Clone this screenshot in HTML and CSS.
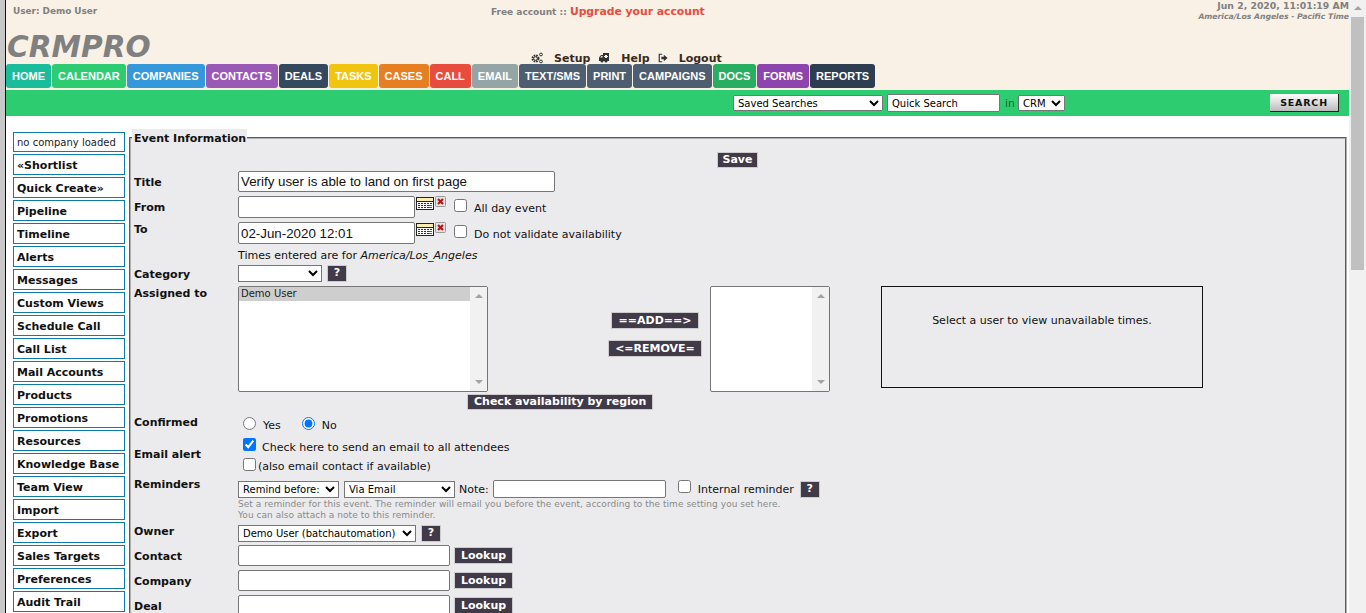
FILE: index.html
```html
<!DOCTYPE html>
<html lang="en">
<head>
    <meta charset="UTF-8">
    <title>CRMPRO</title>
    <link rel="stylesheet" href="styles.css">
</head>
<body>
<div class="frame">
    <div class="frame-edge"></div>
    <div class="page">
        <div class="top">
            <div class="top-info">
                <div class="user">User: Demo User</div>
                <div class="account">Free account :: <a href="#">Upgrade your account</a></div>
                <div class="clock">
                    <div class="date">Jun 2, 2020, 11:01:19 AM</div>
                    <div class="zone">America/Los Angeles - Pacific Time</div>
                </div>
            </div>
            <div class="logo-row">
                <div class="logo">CRMPRO</div>
                <div class="links">
                    <svg class="ico" viewBox="0 0 12 12"><circle cx="4.5" cy="6.5" r="3" fill="none" stroke="#333" stroke-width="2" stroke-dasharray="1.6 .8"/><circle cx="4.5" cy="6.5" r="1.8" fill="none" stroke="#333"/><circle cx="10" cy="2.5" r="1.4" fill="none" stroke="#333"/><circle cx="10" cy="9.5" r="1.4" fill="none" stroke="#333"/></svg>
                    <a href="#">Setup</a>
                    <svg class="ico ico-help" viewBox="0 0 11 12"><path d="M4 1h6v8H8.500a1.500 1.500 0 0 1-3 0h-1a1.500 1.500 0 0 1-3 0H0V5.500L2 3h2z" fill="#333"/><path d="M1.200 5.500 2.500 4H3.500v1.500zM6 3h2v1h1v1H8v1H6V5H5V4h1z" fill="#faf1e6"/></svg>
                    <a href="#">Help</a>
                    <svg class="ico ico-out" viewBox="0 0 12 12"><path d="M5 1.5H1.500v9H5" fill="none" stroke="#333" stroke-width="1.400"/><path d="M4 4.500h3V2l4.500 4L7 10V7.500H4z" fill="#333"/></svg>
                    <a href="#">Logout</a>
                </div>
            </div>
            <div class="tabs">
                <a class="tab c-home" href="#">HOME</a>
                <a class="tab c-cal" href="#">CALENDAR</a>
                <a class="tab c-comp" href="#">COMPANIES</a>
                <a class="tab c-cont" href="#">CONTACTS</a>
                <a class="tab c-deal" href="#">DEALS</a>
                <a class="tab c-task" href="#">TASKS</a>
                <a class="tab c-case" href="#">CASES</a>
                <a class="tab c-call" href="#">CALL</a>
                <a class="tab c-mail" href="#">EMAIL</a>
                <a class="tab c-text" href="#">TEXT/SMS</a>
                <a class="tab c-text" href="#">PRINT</a>
                <a class="tab c-text" href="#">CAMPAIGNS</a>
                <a class="tab c-docs" href="#">DOCS</a>
                <a class="tab c-form" href="#">FORMS</a>
                <a class="tab c-rep" href="#">REPORTS</a>
            </div>
        </div>
        <div class="searchbar">
            <select class="saved"><option>Saved Searches</option></select>
            <input class="quick" type="text" value="Quick Search">
            <span class="in">in</span>
            <select class="crm"><option>CRM</option></select>
            <button class="search-btn" type="button">SEARCH</button>
        </div>
        <div class="content">
            <div class="side">
                <div class="side-item side-first">no company loaded</div>
                <a class="side-item" href="#">«Shortlist</a>
                <a class="side-item" href="#">Quick Create»</a>
                <a class="side-item" href="#">Pipeline</a>
                <a class="side-item" href="#">Timeline</a>
                <a class="side-item" href="#">Alerts</a>
                <a class="side-item" href="#">Messages</a>
                <a class="side-item" href="#">Custom Views</a>
                <a class="side-item" href="#">Schedule Call</a>
                <a class="side-item" href="#">Call List</a>
                <a class="side-item" href="#">Mail Accounts</a>
                <a class="side-item" href="#">Products</a>
                <a class="side-item" href="#">Promotions</a>
                <a class="side-item" href="#">Resources</a>
                <a class="side-item" href="#">Knowledge Base</a>
                <a class="side-item" href="#">Team View</a>
                <a class="side-item" href="#">Import</a>
                <a class="side-item" href="#">Export</a>
                <a class="side-item" href="#">Sales Targets</a>
                <a class="side-item" href="#">Preferences</a>
                <a class="side-item" href="#">Audit Trail</a>
            </div>
            <fieldset class="event">
                <legend>Event Information</legend>
                <div class="save-row"><button class="dark save" type="button">Save</button></div>

                <div class="row h-title">
                    <label class="lbl">Title</label>
                    <input class="txt w-title" type="text" value="Verify user is able to land on first page">
                </div>
                <div class="row h-date">
                    <label class="lbl lbl-from">From</label>
                    <input class="txt w-date" type="text">
                    <svg class="cal" viewBox="0 0 18 13"><rect x=".5" y=".5" width="17" height="12" fill="#fff" stroke="#222"/><rect x="1" y="1" width="16" height="3" fill="#fdeeb0"/><path d="M1 4.500h16" stroke="#222"/><path d="M2 6.500h14M2 8.500h14M2 10.500h14" stroke="#333" stroke-dasharray="2 1"/><path d="M13 8.500h3M13 10.500h3" stroke="#d22"/></svg>
                    <svg class="del" viewBox="0 0 11 11"><rect x=".5" y=".5" width="10" height="10" rx="1" fill="#e4e4e4" stroke="#999"/><path d="M3 3l5 5M8 3l-5 5" stroke="#b01818" stroke-width="2.200"/></svg>
                    <input class="chk chk-top" type="checkbox">
                    <span class="opt opt-low">All day event</span>
                </div>
                <div class="row h-date">
                    <label class="lbl">To</label>
                    <input class="txt w-date" type="text" value="02-Jun-2020 12:01">
                    <svg class="cal" viewBox="0 0 18 13"><rect x=".5" y=".5" width="17" height="12" fill="#fff" stroke="#222"/><rect x="1" y="1" width="16" height="3" fill="#fdeeb0"/><path d="M1 4.500h16" stroke="#222"/><path d="M2 6.500h14M2 8.500h14M2 10.500h14" stroke="#333" stroke-dasharray="2 1"/><path d="M13 8.500h3M13 10.500h3" stroke="#d22"/></svg>
                    <svg class="del" viewBox="0 0 11 11"><rect x=".5" y=".5" width="10" height="10" rx="1" fill="#e4e4e4" stroke="#999"/><path d="M3 3l5 5M8 3l-5 5" stroke="#b01818" stroke-width="2.200"/></svg>
                    <input class="chk chk-top" type="checkbox">
                    <span class="opt opt-low">Do not validate availability</span>
                </div>
                <div class="row h-times">
                    <span class="lbl"></span>
                    <span class="opt">Times entered are for <em>America/Los_Angeles</em></span>
                </div>
                <div class="row h-cat">
                    <label class="lbl">Category</label>
                    <select class="sel w-cat"><option></option></select>
                    <button class="dark help" type="button">?</button>
                </div>
                <div class="row h-assign">
                    <label class="lbl">Assigned to</label>
                    <div class="list w-left">
                        <div class="list-body"><div class="list-picked">Demo User</div></div>
                        <div class="list-bar"><span class="up"></span><span class="down"></span></div>
                    </div>
                    <div class="movers">
                        <button class="dark add" type="button">==ADD==&gt;</button>
                        <button class="dark" type="button">&lt;=REMOVE=</button>
                    </div>
                    <div class="list w-right">
                        <div class="list-body"></div>
                        <div class="list-bar"><span class="up"></span><span class="down"></span></div>
                    </div>
                    <div class="unavail">Select a user to view unavailable times.</div>
                </div>
                <div class="row h-check">
                    <button class="dark check-region" type="button">Check availability by region</button>
                </div>
                <div class="row h-conf">
                    <label class="lbl">Confirmed</label>
                    <input class="rad" type="radio" name="conf">
                    <span class="opt rad-text">Yes</span>
                    <input class="rad" type="radio" name="conf" checked>
                    <span class="opt opt-conf">No</span>
                </div>
                <div class="row h-alert">
                    <label class="lbl">Email alert</label>
                    <div class="alert-opts">
                        <div><input class="chk chk-a" type="checkbox" checked><span class="opt opt-a">Check here to send an email to all attendees</span></div>
                        <div><input class="chk chk-b" type="checkbox"><span class="opt opt-b">(also email contact if available)</span></div>
                    </div>
                </div>
                <div class="row h-rem">
                    <label class="lbl">Reminders</label>
                    <select class="sel w-before"><option>Remind before:</option></select>
                    <select class="sel w-via"><option>Via Email</option></select>
                    <span class="opt note">Note:</span>
                    <input class="txt w-note" type="text">
                    <input class="chk chk-int" type="checkbox">
                    <span class="opt">Internal reminder</span>
                    <button class="dark help help-int" type="button">?</button>
                </div>
                <div class="row h-hint">
                    <span class="lbl"></span>
                    <div class="hint">Set a reminder for this event. The reminder will email you before the event, according to the time setting you set here.<br>You can also attach a note to this reminder.</div>
                </div>
                <div class="row h-owner">
                    <label class="lbl">Owner</label>
                    <select class="sel w-owner"><option>Demo User (batchautomation)</option></select>
                    <button class="dark help" type="button">?</button>
                </div>
                <div class="row h-look h-look-first">
                    <label class="lbl">Contact</label>
                    <input class="txt w-look" type="text">
                    <button class="dark lookup" type="button">Lookup</button>
                </div>
                <div class="row h-look">
                    <label class="lbl">Company</label>
                    <input class="txt w-look" type="text">
                    <button class="dark lookup" type="button">Lookup</button>
                </div>
                <div class="row h-look">
                    <label class="lbl">Deal</label>
                    <input class="txt w-look" type="text">
                    <button class="dark lookup" type="button">Lookup</button>
                </div>
            </fieldset>
        </div>
    </div>
    <div class="scroll">
        <span class="up"></span>
        <div class="thumb"></div>
    </div>
</div>
</body>
</html>
```

FILE: styles.css
```css
html, body {
    margin: 0;
    height: 100%;
    overflow: hidden;
}
body {
    font-family: "DejaVu Sans", sans-serif;
    font-size: 11px;
    color: #111;
    background: #fff;
}
a {
    text-decoration: none;
}
.frame {
    display: flex;
    height: 613px;
    overflow: hidden;
}
.frame-edge {
    width: 6px;
    flex: none;
    box-sizing: border-box;
    background: #c8c8c8;
    border-right: 1px solid #111;
}
.page {
    width: 1343px;
    flex: none;
    overflow: hidden;
}
.scroll {
    width: 17px;
    flex: none;
    background: #f1f1f1;
    position: relative;
}
.scroll .up {
    margin: 6px auto 0;
}
.thumb {
    position: absolute;
    top: 17px;
    left: 2px;
    width: 13px;
    height: 253px;
    background: #c0c0c0;
}

/* header */
.top {
    background: #f9f1e6;
    height: 90px;
    display: flex;
    flex-direction: column;
}
.top-info {
    display: flex;
    height: 33px;
    color: #808080;
    font-weight: bold;
}
.user {
    width: 485px;
    font-size: 8.900px;
    padding: 6px 0 0 7px;
    box-sizing: border-box;
}
.account {
    width: 400px;
    font-size: 9px;
    padding: 5px 0 0 0;
}
.account a {
    color: #e74c3c;
    font-size: 10.800px;
}
.clock {
    margin-left: auto;
    text-align: right;
}
.date {
    font-size: 9.300px;
}
.zone {
    font-size: 7.700px;
    font-style: italic;
    margin-top: 1px;
}
.logo-row {
    display: flex;
    height: 31px;
}
.logo {
    width: 525px;
    padding-left: 1px;
    font-size: 29.600px;
    line-height: 29px;
    font-weight: bold;
    font-style: italic;
    color: #808080;
    box-sizing: border-box;
}
.links {
    display: flex;
    align-items: center;
    padding-top: 19px;
    height: 12px;
    font-weight: bold;
    font-size: 11px;
}
.links a {
    color: #3b2a1c;
}
.ico {
    width: 12px;
    height: 12px;
    margin-right: 11px;
}
.ico-help {
    width: 11px;
    margin-left: 9px;
    margin-right: 11px;
}
.ico-out {
    margin-left: 8px;
    width: 10px;
    margin-right: 11px;
}
.tabs {
    display: flex;
    gap: 1px;
    height: 24px;
}
.tab {
    display: block;
    height: 24px;
    line-height: 24px;
    padding: 0 6px;
    border-radius: 3px;
    color: #fff;
    font-family: "Liberation Sans", sans-serif;
    font-size: 11px;
    font-weight: bold;
    white-space: nowrap;
}
.c-home { background: #1abc9c; }
.c-cal { background: #2ecc71; }
.c-comp { background: #3498db; }
.c-cont { background: #9b59b6; }
.c-deal { background: #34495e; }
.c-task { background: #f1c40f; }
.c-case { background: #e67e22; }
.c-call { background: #e74c3c; }
.c-mail { background: #95a5a6; }
.c-text { background: #4d5e70; }
.c-docs { background: #27ae60; }
.c-form { background: #8e44ad; }
.c-rep { background: #2c3e50; }

/* green search bar */
.searchbar {
    height: 26px;
    background: #2ecc71;
    display: flex;
    align-items: center;
    font-size: 10px;
}
.saved {
    margin-left: 727px;
    width: 150px;
    height: 16px;
    font: 10px "DejaVu Sans", sans-serif;
    padding: 0;
}
.quick {
    margin-left: 4px;
    width: 113px;
    height: 18px;
    box-sizing: border-box;
    font: 10px "DejaVu Sans", sans-serif;
    padding: 0 3px;
}
.in {
    color: #0f6a30;
    margin-left: 5px;
    font-size: 11px;
}
.crm {
    margin-left: 3px;
    width: 47px;
    height: 16px;
    font: 10px "DejaVu Sans", sans-serif;
    padding: 0;
}
.search-btn {
    margin-left: 205px;
    width: 69px;
    height: 18px;
    padding: 0;
    border: 0;
    border-right: 1px solid #222;
    border-bottom: 1px solid #222;
    background: linear-gradient(#fff, #bbb);
    font: bold 9.500px "DejaVu Sans", sans-serif;
    letter-spacing: .8px;
    color: #111;
}

/* main area */
.content {
    display: flex;
    align-items: flex-start;
}
.side {
    width: 112px;
    flex: none;
    margin: 16px 0 0 7px;
    display: flex;
    flex-direction: column;
    gap: 2px;
}
.side-item {
    display: block;
    box-sizing: border-box;
    height: 21px;
    line-height: 19px;
    padding: 1px 0 0 3px;
    border: 1px solid #0f7ca5;
    color: #111;
    font-size: 11px;
    font-weight: bold;
    background: #fff;
}
.side-first {
    height: 20px;
    font-weight: normal;
    font-size: 10px;
    color: #222;
    line-height: 18px;
}
.event {
    margin: 13px 0 0 4px;
    padding: 0 0 0 3px;
    width: 1218px;
    height: 500px;
    box-sizing: border-box;
    background: #ebebed;
    border: 2px groove #b0b0b0;
    border-bottom: 0;
    min-width: 0;
}
.event legend {
    padding: 0 1px 0 2px;
    margin-left: -2px;
    font-weight: bold;
    font-size: 11px;
    background: #ebebed;
    height: 17px;
    line-height: 19px;
}
.save-row {
    text-align: center;
    height: 21px;
    padding: 6px 4px 0 0;
    box-sizing: border-box;
}
.dark {
    background: #413a49;
    color: #fff;
    font: bold 11px "DejaVu Sans", sans-serif;
    border: 1px solid #ccc;
    padding: 0 6px;
    height: 17px;
    line-height: 14px;
}
.save {
    height: 16px;
    padding: 0 5px;
}
.help {
    width: 20px;
    height: 17px;
    padding: 0;
    margin-left: 5px;
}
.row {
    display: flex;
    align-items: center;
}
.lbl {
    width: 104px;
    flex: none;
    font-weight: bold;
    font-size: 11px;
}
.opt {
    font-size: 11px;
}
.txt {
    box-sizing: border-box;
    border: 1px solid #767676;
    border-radius: 2px;
    background: #fff;
    padding: 1px 2px;
    height: 21px;
    font: 13.330px "Liberation Sans", sans-serif;
    color: #111;
}
.sel {
    box-sizing: border-box;
    height: 17px;
    font: 10px "DejaVu Sans", sans-serif;
    padding: 0;
    background: #fff;
}
.chk {
    width: 13px;
    height: 13px;
    margin: 0 7px 0 0;
}
.chk-top {
    align-self: flex-start;
    margin-top: 3px;
}
.opt-low {
    margin-top: 2px;
}
.cal {
    width: 18px;
    height: 13px;
    flex: none;
    margin: 1px 0 0 1px;
    align-self: flex-start;
}
.del {
    width: 11px;
    height: 11px;
    flex: none;
    margin: 0 8px 0 1px;
    align-self: flex-start;
}
.h-title {
    height: 21px;
    margin-top: 4px;
}
.h-title .lbl, .h-cat .lbl {
    padding-top: 2px;
}
.w-title { width: 317px; }
.h-date {
    height: 22px;
    margin-top: 4px;
}
.h-date .lbl {
    align-self: flex-start;
    padding-top: 1px;
}
.h-date .lbl-from {
    margin-top: 4px;
}
.w-date { width: 177px; height: 22px; }
.h-times {
    height: 14px;
    margin-top: 4px;
}
.h-cat {
    height: 18px;
    margin-top: 2px;
}
.w-cat { width: 84px; }
.h-assign {
    height: 106px;
    margin-top: 4px;
    align-items: flex-start;
}
.h-assign .lbl {
    padding-top: 1px;
}
.list {
    display: flex;
    height: 106px;
    box-sizing: border-box;
    border: 1px solid #767676;
    border-radius: 2px;
    background: #fff;
}
.w-left { width: 250px; }
.w-right { width: 120px; }
.list-body {
    flex: 1;
    font-size: 10px;
}
.list-picked {
    background: #cecece;
    color: #222;
    padding-left: 2px;
    height: 14px;
    line-height: 14px;
}
.list-bar {
    width: 17px;
    background: #f1f1f1;
    display: flex;
    flex-direction: column;
    justify-content: space-between;
    align-items: center;
    padding: 7px 0;
}
.up, .down {
    display: block;
    width: 0;
    border: 4px solid transparent;
}
.up {
    border-top: 0;
    border-bottom-color: #a3a3a3;
}
.down {
    border-bottom: 0;
    border-top-color: #a3a3a3;
}
.movers {
    width: 222px;
    display: flex;
    flex-direction: column;
    align-items: center;
    gap: 11px;
    padding: 26px 0 0 112px;
    box-sizing: border-box;
}
.add {
    padding: 0 7px;
}
.unavail {
    margin: 0 0 0 51px;
    width: 322px;
    height: 102px;
    box-sizing: border-box;
    border: 1px solid #111;
    text-align: center;
    padding-top: 27px;
    font-size: 11px;
}
.h-check {
    height: 16px;
    margin-top: 2px;
}
.check-region {
    margin-left: 333px;
    height: 16px;
}
.h-conf {
    height: 20px;
    margin-top: 4px;
}
.h-conf .lbl {
    margin-top: -4px;
}
.rad {
    width: 13px;
    height: 13px;
    margin: -2px 7px 0 5px;
}
.rad-text {
    margin: 2px 16px 0 0;
}
.opt-conf {
    margin-top: 2px;
}
.h-alert {
    height: 36px;
    margin-top: 3px;
}
.h-alert .lbl {
    margin-top: -2px;
}
.alert-opts {
    margin-left: 5px;
}
.alert-opts div {
    display: flex;
    align-items: center;
    height: 18px;
}
.chk-a {
    margin: -3px 6px 0 0;
}
.opt-a {
    margin-top: 2px;
}
.chk-b {
    margin-right: 2px;
}
.opt-b {
    margin-top: 4px;
}
.h-rem {
    height: 18px;
    margin-top: 7px;
}
.h-rem .lbl {
    margin-top: -10px;
}
.w-before { width: 101px; }
.w-via { width: 111px; margin-left: 5px; }
.note { margin: 0 4px 0 4px; }
.w-note { width: 173px; height: 18px; }
.chk-int { margin: -5px 7px 0 12px; }
.help-int { margin-left: 6px; }
.h-hint {
    height: 24px;
    align-items: flex-start;
}
.hint {
    font-size: 9px;
    line-height: 11px;
    letter-spacing: .04px;
    color: #8a8a8a;
    padding-top: 1px;
}
.h-owner {
    height: 18px;
    margin-top: 2px;
}
.h-owner .lbl {
    margin-top: -4px;
}
.w-owner { width: 178px; }
.h-look {
    height: 21px;
    margin-top: 4px;
}
.h-look-first {
    margin-top: 3px;
}
.h-look .lbl {
    margin-top: 2px;
}
.w-look { width: 212px; }
.lookup {
    margin-left: 4px;
    padding: 0 6px;
}
```
